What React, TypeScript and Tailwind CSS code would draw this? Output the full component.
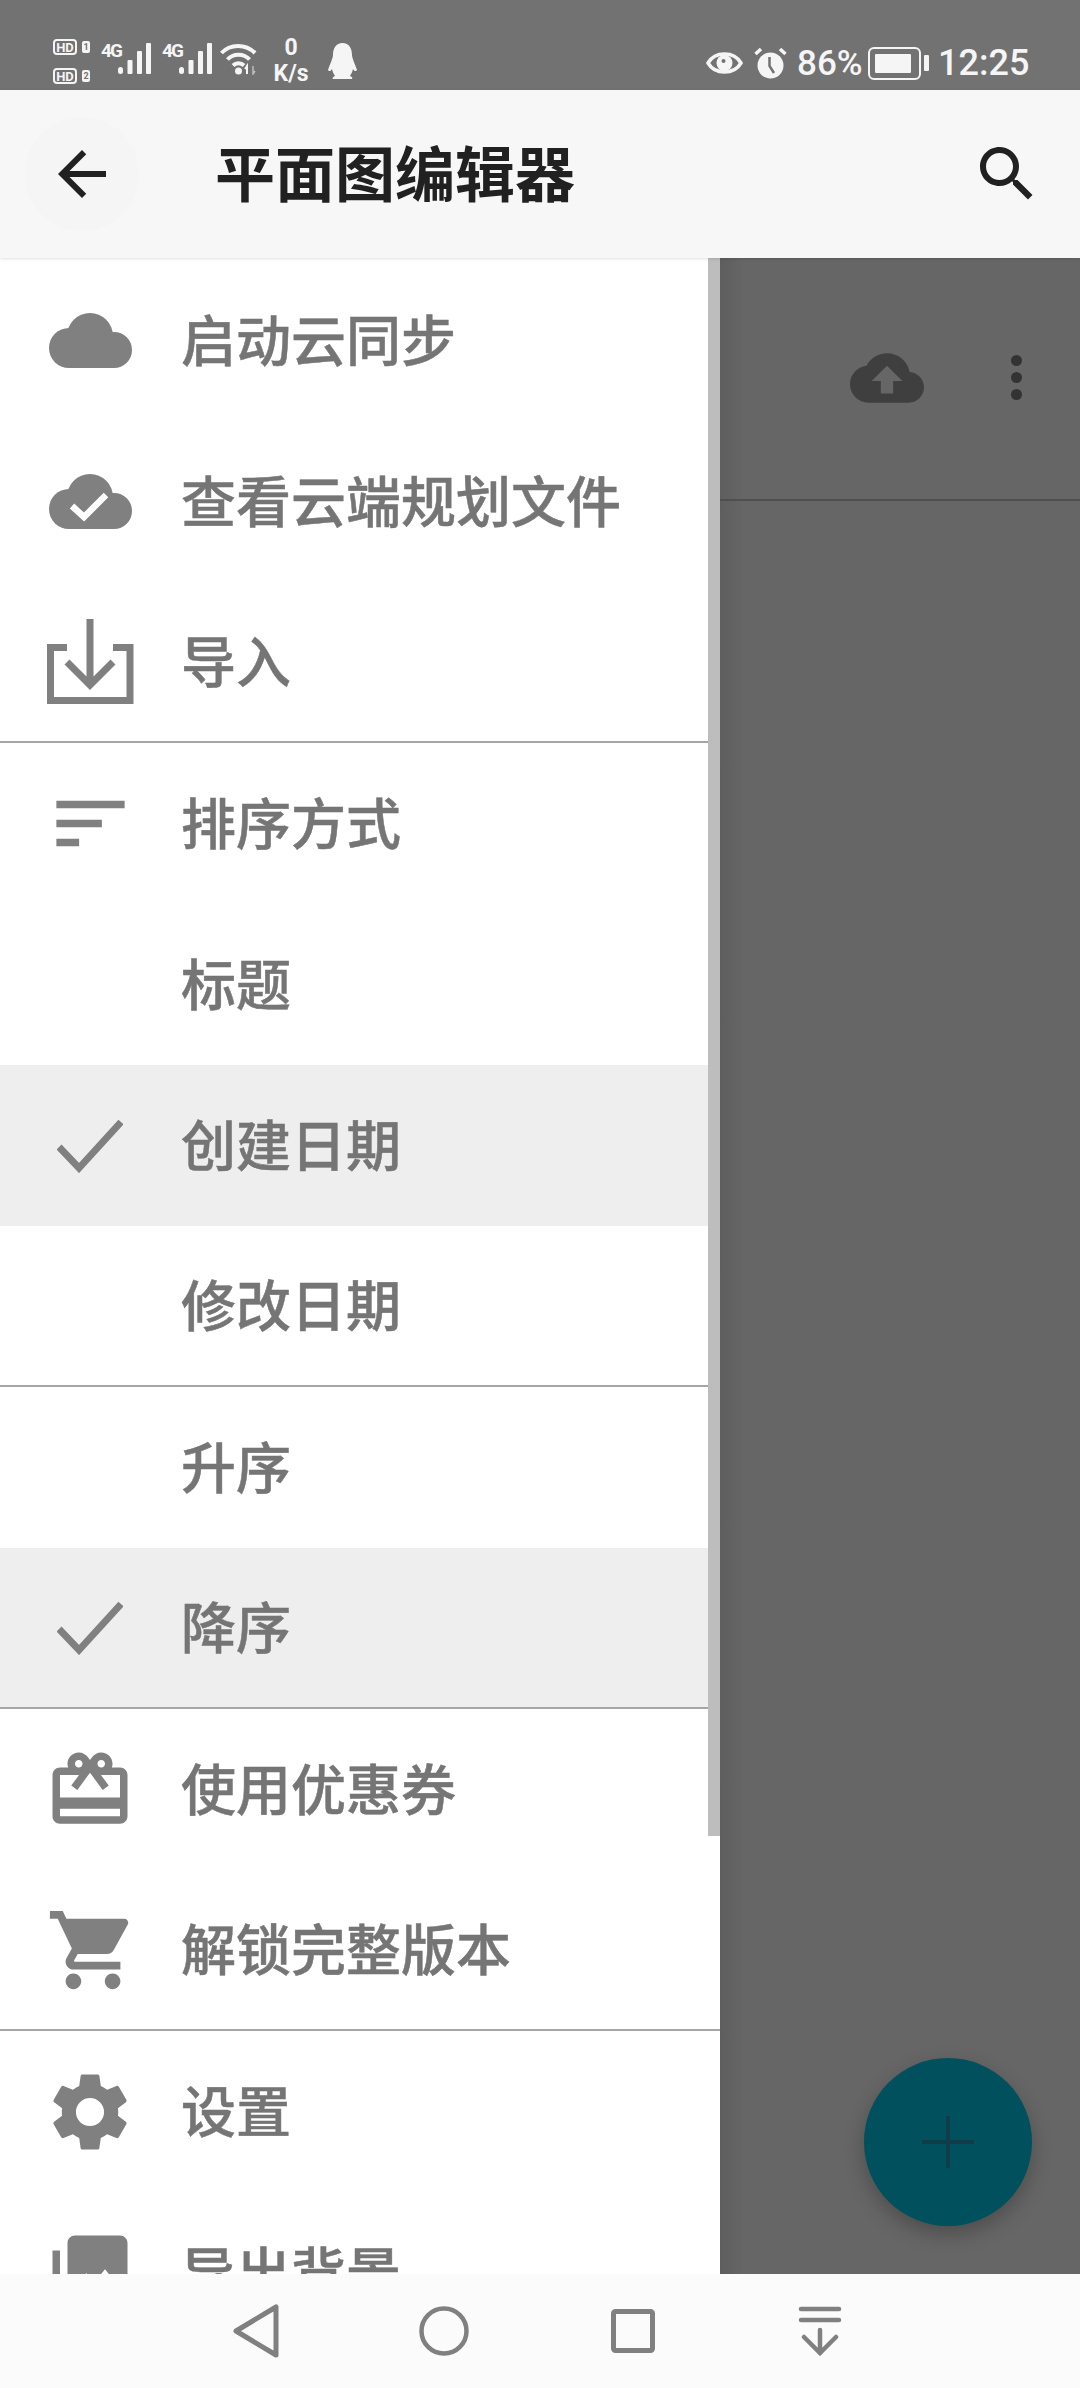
import React from "react";

const CJK = { fontFamily: '"Noto Sans CJK SC", "Noto Sans", sans-serif' };

const P: Record<string, string> = {
  gift: "M20 6h-2.18c.11-.31.18-.65.18-1 0-1.66-1.34-3-3-3-1.05 0-1.96.54-2.5 1.35l-.5.67-.5-.68C10.96 2.54 10.05 2 9 2 7.34 2 6 3.34 6 5c0 .35.07.69.18 1H4c-1.11 0-1.99.89-1.99 2L2 19c0 1.11.89 2 2 2h16c1.11 0 2-.89 2-2V8c0-1.11-.89-2-2-2zm-5-2c.55 0 1 .45 1 1s-.45 1-1 1-1-.45-1-1 .45-1 1-1zM9 4c.55 0 1 .45 1 1s-.45 1-1 1-1-.45-1-1 .45-1 1-1zm11 15H4v-2h16v2zm0-5H4V8h5.08L7 10.83 8.62 12 11 8.76l1-1.36 1 1.36L15.38 12 17 10.83 14.92 8H20v6z",
  cart: "M7 18c-1.1 0-1.99.9-1.99 2S5.9 22 7 22s2-.9 2-2-.9-2-2-2zM1 2v2h2l3.6 7.59-1.35 2.45c-.16.28-.25.61-.25.96 0 1.1.9 2 2 2h12v-2H7.42c-.14 0-.25-.11-.25-.25l.03-.12.9-1.63h7.45c.75 0 1.41-.41 1.75-1.03l3.58-6.47c.08-.14.12-.31.12-.48 0-.55-.45-1-1-1H5.21l-.94-2H1zm16 16c-1.1 0-1.99.9-1.99 2s.89 2 1.99 2 2-.9 2-2-.9-2-2-2z",
  gear: "M19.14 12.94c.04-.3.06-.61.06-.94 0-.32-.02-.64-.07-.94l2.03-1.58c.18-.14.23-.41.12-.61l-1.92-3.32c-.12-.22-.37-.29-.59-.22l-2.39.96c-.5-.38-1.03-.7-1.62-.94l-.36-2.54c-.04-.24-.24-.41-.48-.41h-3.84c-.24 0-.43.17-.47.41l-.36 2.54c-.59.24-1.13.57-1.62.94l-2.39-.96c-.22-.08-.47 0-.59.22L2.74 8.87c-.12.21-.08.47.12.61l2.03 1.58c-.05.3-.09.63-.09.94s.02.64.07.94l-2.03 1.58c-.18.14-.23.41-.12.61l1.92 3.32c.12.22.37.29.59.22l2.39-.96c.5.38 1.03.7 1.62.94l.36 2.54c.05.24.24.41.48.41h3.84c.24 0 .44-.17.47-.41l.36-2.54c.59-.24 1.13-.56 1.62-.94l2.39.96c.22.08.47 0 .59-.22l1.92-3.32c.12-.22.07-.47-.12-.61l-2.01-1.58zM12 15.6c-1.98 0-3.6-1.62-3.6-3.6s1.62-3.6 3.6-3.6 3.6 1.62 3.6 3.6-1.62 3.6-3.6 3.6z",
  photos: "M22 16V4c0-1.1-.9-2-2-2H8c-1.1 0-2 .9-2 2v12c0 1.1.9 2 2 2h12c1.1 0 2-.9 2-2zm-11-4l2.03 2.71L16 11l4 5H8l3-4zM2 6v14c0 1.1.9 2 2 2h14v-2H4V6H2z",
  sort: "M3 18h6v-2H3v2zM3 6v2h18V6H3zm0 7h12v-2H3v2z",
  back: "M20 11H7.83l5.59-5.59L12 4l-8 8 8 8 1.41-1.41L7.83 13H20v-2z",
  search: "M15.5 14h-.79l-.28-.27C15.41 12.59 16 11.11 16 9.5 16 5.91 13.09 3 9.5 3S3 5.91 3 9.5 5.91 16 9.5 16c1.61 0 3.09-.59 4.23-1.57l.27.28v.79l5 4.99L20.49 19l-4.99-5zm-6 0C7.01 14 5 11.99 5 9.5S7.01 5 9.5 5 14 7.01 14 9.5 11.99 14 9.5 14z",
  upload: "M19.35 10.04C18.67 6.59 15.64 4 12 4 9.11 4 6.6 5.64 5.35 8.04 2.34 8.36 0 10.91 0 14c0 3.31 2.69 6 6 6h13c2.76 0 5-2.24 5-5 0-2.64-2.05-4.78-4.65-4.96zM14 13v4h-4v-4H7l5-5 5 5h-3z",
};

function Mat({ d, size, color = "#808080", className = "" }: { d: string; size: number; color?: string; className?: string }) {
  return (
    <svg width={size} height={size} viewBox="0 0 24 24" fill={color} className={`shrink-0 ${className}`}>
      <path d={d} />
    </svg>
  );
}

function Cloud({ done }: { done?: boolean }) {
  return (
    <svg width="83" height="55" viewBox="0 0 83 55" className="shrink-0">
      <g fill="#808080">
        <circle cx="20" cy="35" r="20" />
        <circle cx="41" cy="23" r="23" />
        <circle cx="65" cy="37" r="18" />
        <rect x="20" y="30" width="45" height="25" />
      </g>
      {done && <path d="M23 32 L35 43 L57 21" fill="none" stroke="#fff" strokeWidth="6.5" />}
    </svg>
  );
}

function ImportIcon() {
  return (
    <svg width="87" height="86" viewBox="0 0 87 86" fill="none" stroke="#808080" strokeWidth="7" className="shrink-0">
      <path d="M20 28.5 H3.5 V81.5 H83 V28.5 H66" />
      <path d="M43 0 V66 M20 43 L43 66 L66 43" />
    </svg>
  );
}

function CheckIcon() {
  return (
    <svg width="66" height="54" viewBox="0 0 66 54" fill="none" stroke="#808080" strokeWidth="7" className="shrink-0">
      <path d="M2 28 L22 49 L64 3" />
    </svg>
  );
}

function Row({ icon, label, selected, divider }: { icon?: React.ReactNode; label: string; selected?: boolean; divider?: boolean }) {
  return (
    <div
      className={`flex h-[161px] shrink-0 items-center ${selected ? "bg-[#eeeeee]" : "bg-white"} ${divider ? "border-b-2 border-[#a6a6a6]" : ""}`}
    >
      <div className="flex w-[181px] shrink-0 items-center justify-center pr-[1px]">{icon}</div>
      <span
        className="pb-[6px] text-[55px] leading-none font-medium text-[#757575] [-webkit-text-stroke:0.5px_#757575]"
        style={CJK}
      >
        {label}
      </span>
    </div>
  );
}

function SignalBars() {
  return (
    <svg width="33" height="31" viewBox="0 0 33 31" fill="#f5f5f5" className="shrink-0">
      <rect x="0" y="24" width="5" height="7" rx="2.5" />
      <rect x="9.5" y="17" width="5" height="14" rx="1" />
      <rect x="19" y="8" width="5" height="23" rx="1" />
      <rect x="28" y="0" width="5" height="31" rx="1" />
    </svg>
  );
}

function FourG() {
  return (
    <div className="mt-[5px] ml-[11px] flex items-start">
      <span className="w-[17px] text-[19px] leading-[15px] font-bold tracking-[-2px] whitespace-nowrap">4G</span>
      <SignalBars />
    </div>
  );
}

function StatusLeft() {
  const font = { fontFamily: '"Roboto", sans-serif' };
  return (
    <div className="flex items-start pt-[38px] pl-[53px] text-[#f5f5f5]" style={font}>
      <div className="mt-[1px] flex flex-col gap-[13px]">
        {["1", "2"].map((n) => (
          <div key={n} className="flex items-center gap-[5px]">
            <span className="flex h-[16px] w-[24px] items-center justify-center rounded-[4px] border-2 border-[#f5f5f5] text-[13px] leading-none font-bold">
              HD
            </span>
            <span className="flex h-[12px] w-[8px] items-center justify-center rounded-[2px] bg-[#f5f5f5] text-[9px] leading-none font-bold text-[#727272]">
              {n}
            </span>
          </div>
        ))}
      </div>
      <FourG />
      <FourG />
      <svg width="37" height="32" viewBox="0 0 37 32" fill="none" stroke="#f5f5f5" strokeWidth="4" className="mt-[5px] ml-[8px] shrink-0">
        <path d="M1.5 10 C10 0.5 26 0.5 35 10" />
        <path d="M7.5 16.5 C13 10 24 10 29.5 16.5" />
        <path d="M13 22.5 C16 19.5 21 19.5 24 22.5" />
        <circle cx="18.5" cy="28" r="3.5" fill="#f5f5f5" stroke="none" />
        <path d="M27 31 V23 L25 26" strokeWidth="2" />
        <path d="M33 23 V31 L35 28" strokeWidth="1.5" stroke="#bdbdbd" />
      </svg>
      <div className="ml-[17px] flex h-[45px] w-[34px] flex-col items-center justify-between font-bold">
        <span className="text-[23px] leading-[19px]">0</span>
        <span className="text-[23px] leading-[19px]">K/s</span>
      </div>
      <svg width="29" height="37" viewBox="0 0 29 37" fill="#f5f5f5" className="mt-[5px] ml-[20px] shrink-0">
        <path d="M14.5 0 C21 0 24 5 24 12 C24 15 27 21 29 27 C28 29 26 28 25 26 C24.5 29 23 31 22 33 C25 34 25 36 23 36 L6 36 C4 36 4 34 7 33 C6 31 4.5 29 4 26 C3 28 1 29 0 27 C2 21 5 15 5 12 C5 5 8 0 14.5 0 Z" />
      </svg>
    </div>
  );
}

function StatusRight() {
  const font = { fontFamily: '"Roboto", sans-serif' };
  return (
    <div className="flex items-center pt-[45px] pr-[54px] text-[#f5f5f5]" style={font}>
      <svg width="37" height="30" viewBox="0 0 37 30" fill="none" className="shrink-0">
        <path d="M2 15 C9 3 28 3 35 15 C28 27 9 27 2 15 Z" stroke="#f5f5f5" strokeWidth="3.5" />
        <circle cx="18.5" cy="15" r="8" fill="#f5f5f5" />
        <circle cx="17.5" cy="13" r="2" fill="#727272" />
      </svg>
      <svg width="33" height="32" viewBox="0 0 33 32" fill="none" className="ml-[11px] shrink-0">
        <circle cx="16.5" cy="18.5" r="13" fill="#f5f5f5" />
        <path d="M1.5 7 L7 2 M31.5 7 L26 2" stroke="#f5f5f5" strokeWidth="3.5" />
        <path d="M15.5 10 V19 L20 26" stroke="#727272" strokeWidth="2.5" />
      </svg>
      <span className="ml-[10px] w-[63px] text-[35px] leading-none font-medium whitespace-nowrap">86%</span>
      <div className="ml-[8px] flex items-center">
        <div className="flex h-[33px] w-[53px] items-center rounded-[6px] border-2 border-[#f5f5f5] p-[5px]">
          <div className="h-full w-[36px] rounded-[1px] bg-[#f5f5f5]" />
        </div>
        <div className="ml-[3px] h-[16px] w-[5px] rounded-[1px] bg-[#f5f5f5]" />
      </div>
      <span className="ml-[9px] w-[88px] text-[36px] leading-none font-medium whitespace-nowrap">12:25</span>
    </div>
  );
}

export default function App() {
  return (
    <div className="flex h-[2388px] w-[1080px] flex-col overflow-hidden bg-white">
      <header className="flex h-[90px] shrink-0 items-start justify-between bg-[#727272]">
        <StatusLeft />
        <StatusRight />
      </header>

      <div className="relative z-10 flex h-[168px] shrink-0 items-center bg-[#f7f7f7] shadow-[0_1px_3px_rgba(0,0,0,0.12)]">
        <div className="ml-[25px] flex h-[114px] w-[114px] shrink-0 items-center justify-center rounded-full bg-[#f5f5f5]">
          <Mat d={P.back} size={72} color="#212121" />
        </div>
        <h1 className="ml-[76px] pb-[6px] text-[60px] leading-none font-bold text-[#212121]" style={CJK}>
          平面图编辑器
        </h1>
        <div className="ml-auto mr-[37px]">
          <Mat d={P.search} size={72} color="#212121" />
        </div>
      </div>

      <div className="flex min-h-0 flex-1">
        <nav className="relative flex w-[720px] shrink-0 flex-col overflow-hidden bg-white pt-[2px]">
          <Row icon={<Cloud />} label="启动云同步" />
          <Row icon={<Cloud done />} label="查看云端规划文件" />
          <Row icon={<ImportIcon />} label="导入" divider />
          <Row icon={<Mat d={P.sort} size={91} />} label="排序方式" />
          <Row label="标题" />
          <Row icon={<CheckIcon />} label="创建日期" selected />
          <Row label="修改日期" divider />
          <Row label="升序" />
          <Row icon={<CheckIcon />} label="降序" selected divider />
          <Row icon={<Mat d={P.gift} size={90} />} label="使用优惠券" />
          <Row icon={<Mat d={P.cart} size={94} className="ml-[6px]" />} label="解锁完整版本" divider />
          <Row icon={<Mat d={P.gear} size={94} />} label="设置" />
          <Row icon={<Mat d={P.photos} size={90} />} label="导出背景" />
          <div className="absolute top-0 right-0 h-[1578px] w-[12px] bg-[#bdbdbd]" />
        </nav>

        <main className="relative flex-1 bg-[#666666]">
          <div className="absolute inset-y-0 left-0 w-[24px] bg-gradient-to-r from-[#5e5e5e] to-[#666666]" />
          <div className="relative flex h-[243px] items-center border-b-2 border-[#4f4f4f] pr-[58px] pb-[2px] pl-[130px]">
            <Mat d={P.upload} size={74} color="#3f3f3f" />
            <div className="ml-auto flex flex-col gap-[6px]">
              <div className="h-[11px] w-[11px] rounded-full bg-[#333333]" />
              <div className="h-[11px] w-[11px] rounded-full bg-[#333333]" />
              <div className="h-[11px] w-[11px] rounded-full bg-[#333333]" />
            </div>
          </div>
          <div className="absolute top-[1800px] left-[144px] flex h-[168px] w-[168px] items-center justify-center rounded-full bg-[#00505e] shadow-[0_8px_20px_rgba(0,0,0,0.25)]">
            <svg width="52" height="52" viewBox="0 0 52 52" stroke="#103d48" strokeWidth="4">
              <path d="M26 0 V52 M0 26 H52" />
            </svg>
          </div>
        </main>
      </div>

      <footer className="relative z-10 flex h-[114px] shrink-0 items-center bg-[#fbfbfb] pl-[233px]">
        <svg width="46" height="54" viewBox="0 0 46 54" fill="none" stroke="#808080" strokeWidth="5" strokeLinejoin="round" className="shrink-0">
          <path d="M43 3 V51 L3 27 Z" />
        </svg>
        <svg width="50" height="50" viewBox="0 0 50 50" fill="none" stroke="#808080" strokeWidth="4.5" className="ml-[140px] shrink-0">
          <circle cx="25" cy="25" r="22.5" />
        </svg>
        <svg width="44" height="44" viewBox="0 0 44 44" fill="none" stroke="#808080" strokeWidth="5" className="ml-[142px] shrink-0">
          <rect x="2.5" y="2.5" width="39" height="39" rx="2" />
        </svg>
        <svg width="44" height="50" viewBox="0 0 44 50" fill="none" stroke="#808080" strokeWidth="4.5" strokeLinecap="round" className="ml-[143px] shrink-0">
          <path d="M3 3 H41 M3 14 H41 M22 24 V47 M6 31 L22 47 L38 31" />
        </svg>
      </footer>
    </div>
  );
}
